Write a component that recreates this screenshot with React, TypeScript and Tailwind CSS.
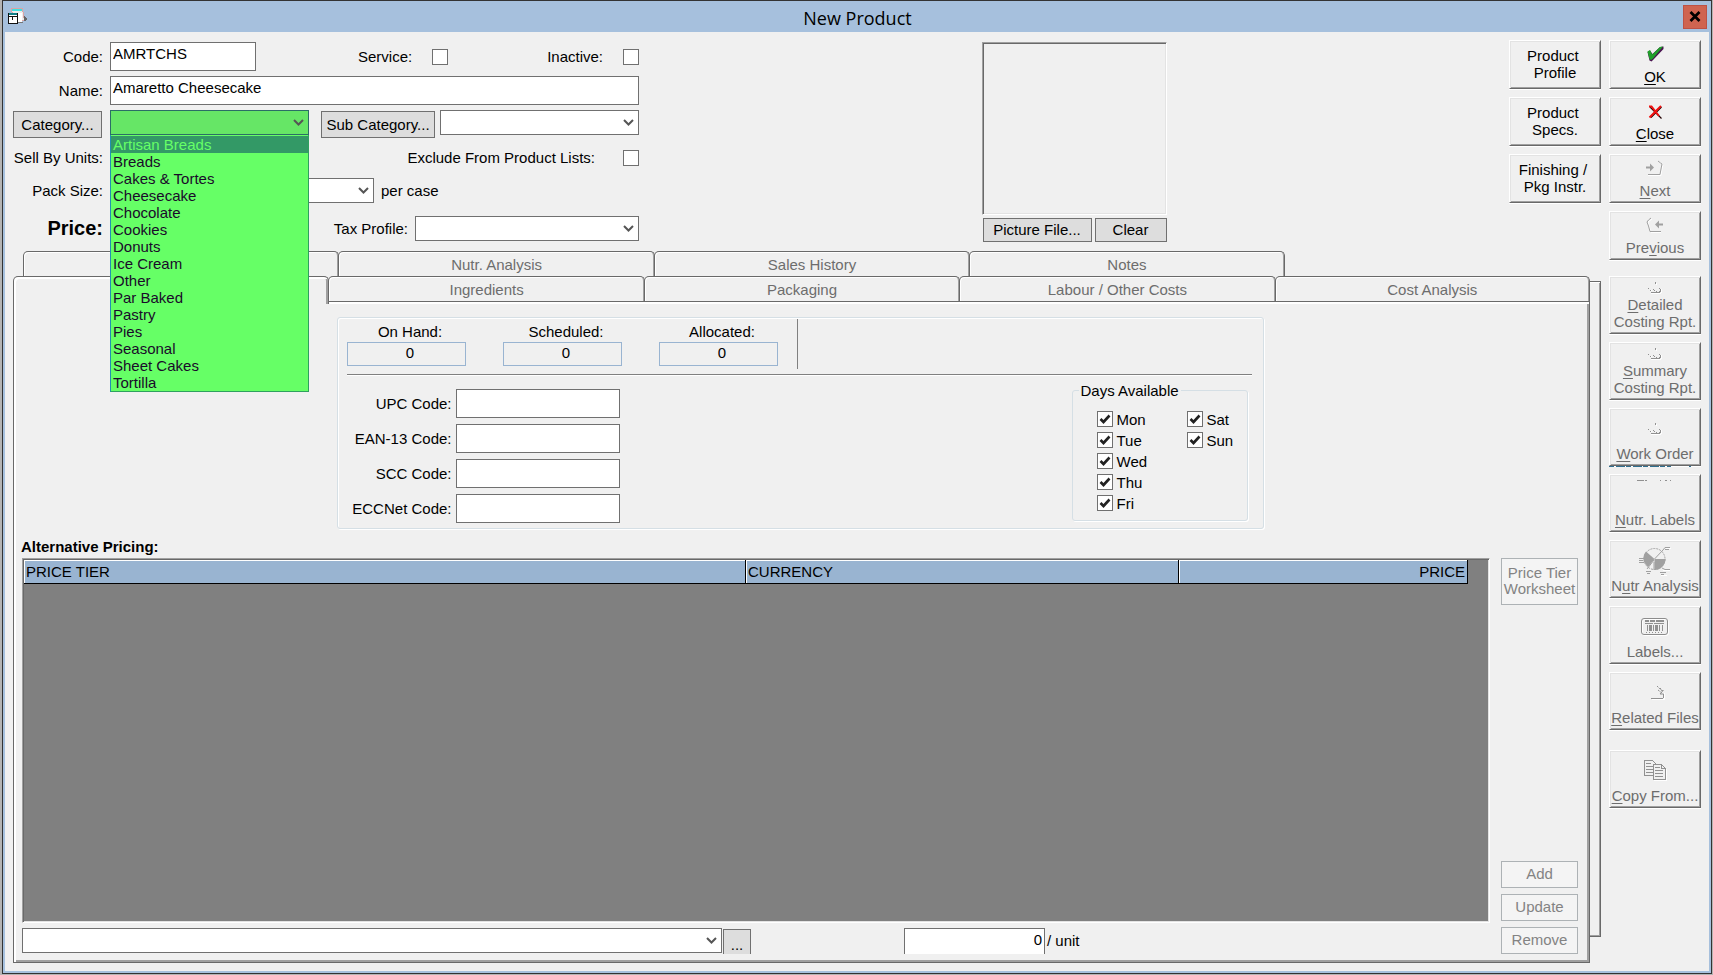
import { useState } from 'react';
import type { ReactNode } from 'react';
import clsx from 'clsx';

const categories = [
  'Artisan Breads',
  'Breads',
  'Cakes & Tortes',
  'Cheesecake',
  'Chocolate',
  'Cookies',
  'Donuts',
  'Ice Cream',
  'Other',
  'Par Baked',
  'Pastry',
  'Pies',
  'Seasonal',
  'Sheet Cakes',
  'Tortilla',
];

const backTabs = ['', 'Nutr. Analysis', 'Sales History', 'Notes'];
const frontTabs = ['', 'Ingredients', 'Packaging', 'Labour / Other Costs', 'Cost Analysis'];
const codes = ['UPC Code:', 'EAN-13 Code:', 'SCC Code:', 'ECCNet Code:'];
const stock = ['On Hand:', 'Scheduled:', 'Allocated:'];

const field = 'border border-[#707070] bg-white px-0.5';
const flatButton = 'border border-[#707070] bg-[#dddddd] text-center';
const disabledButton = 'border border-[#adb2b5] bg-[#f4f4f4] pb-0.5 text-center text-[#838383]';
const sunken =
  'border border-t-[#a0a0a0] border-l-[#a0a0a0] border-r-white border-b-white shadow-[inset_1px_1px_0_#696969,inset_-1px_-1px_0_#e3e3e3]';
const raised =
  'border border-t-white border-l-white border-r-[#696969] border-b-[#696969] shadow-[inset_1px_1px_0_#e3e3e3,inset_-1px_-1px_0_#a0a0a0,0_1px_0_#fff]';

function Combo({ id, label, className, green }: { id: string; label?: string; className?: string; green?: boolean }) {
  return (
    <div className={clsx('relative h-[25px]', className)}>
      <select
        id={id}
        aria-label={label}
        className={clsx(
          'block h-full w-full appearance-none border px-0.5 outline-none',
          green ? 'border-[#2b6e66] bg-[#66e666]' : 'border-[#707070] bg-white',
        )}
      >
        <option value=""></option>
        {green && categories.map((c) => <option key={c}>{c}</option>)}
      </select>
      <svg className="pointer-events-none absolute top-[9px] right-[5px]" width="11" height="8" viewBox="0 0 11 8">
        <path d="M1 1 L5.5 5.5 L10 1" fill="none" stroke="#555" strokeWidth="2" />
      </svg>
    </div>
  );
}

function Check({ id, initial = false }: { id: string; initial?: boolean }) {
  const [on, setOn] = useState(initial);
  return (
    <span className="relative block h-4 w-4 shrink-0">
      <input
        id={id}
        type="checkbox"
        checked={on}
        onChange={() => setOn(!on)}
        className="block h-4 w-4 appearance-none border border-[#707070] bg-white"
      />
      {on && (
        <svg className="pointer-events-none absolute inset-0" width="16" height="16" viewBox="0 0 16 16">
          <path d="M3.5 8 L6.5 11 L12.5 4.5" fill="none" stroke="#222" strokeWidth="2.6" />
        </svg>
      )}
    </span>
  );
}

function Tab({ label, active, onClick }: { label: string; active?: boolean; onClick?: () => void }) {
  return (
    <button
      type="button"
      onClick={onClick}
      className={clsx(
        '-mr-px h-[25px] rounded-t-[5px] border border-b-0 border-[#696969] bg-[#f0f0f0] text-[#6d6d6d] last:mr-0',
        active
          ? 'relative z-10 -mb-[3px] h-[28px] shadow-[inset_2px_2px_0_#fff,inset_-2px_0_0_#a0a0a0]'
          : 'shadow-[inset_1px_1px_0_#fff,inset_-1px_0_0_#a0a0a0]',
      )}
    >
      {label}
    </button>
  );
}

// Side buttons: icon on top, caption with its access key underlined
function ToolButton({
  icon,
  before = '',
  accel = '',
  after,
  line2,
  small,
  enabled,
}: {
  icon: ReactNode;
  before?: string;
  accel?: string;
  after: string;
  line2?: string;
  small?: boolean;
  enabled?: boolean;
}) {
  return (
    <button
      type="button"
      disabled={!enabled}
      className={clsx(
        raised,
        'flex w-full shrink-0 flex-col items-center pt-[3px] pb-[3px] whitespace-nowrap',
        small ? 'h-[49px]' : 'h-[58px]',
        enabled ? 'text-black' : 'text-[#6d6d6d]',
      )}
    >
      <span className={clsx('grid flex-1 justify-items-center', small ? 'items-start pt-0.5' : 'items-center')}>{icon}</span>
      <span className="block">
        {before}
        {accel && <u className="underline-offset-2">{accel}</u>}
        {after}
      </span>
      {line2 && <span className="block">{line2}</span>}
    </button>
  );
}

function AppIcon() {
  return (
    <svg width="20" height="17" viewBox="0 0 20 17" shapeRendering="crispEdges">
      <path d="M3.5 0.5 H14.5 L16.5 12.5 H5.5 Z" fill="#ececec" stroke="#d9a5a5" />
      <path d="M4 1 H14 V3 H4 Z" fill="#40e0e0" />
      <path d="M16 8 L19 11 L17 13 L16 13 Z" fill="#666" />
      <path d="M6 5 H14 V14 H9 V6 H6 Z" fill="#fff" />
      <path d="M10 14.5 H15" stroke="#777" />
      <path d="M0.5 5.5 H9.5 V15.5 H0.5 Z" fill="#fff" stroke="#111" />
      <path d="M1 5 H9 V7 H1 Z" fill="#0f7f86" />
      <path d="M0 8.5 H10 M4.5 9 V12" stroke="#111" />
    </svg>
  );
}

function OkIcon() {
  return (
    <svg width="17" height="16" viewBox="0 0 17 16">
      <path d="M0.5 6 L3 4.5 L5.5 8 L13 1 L16.5 0.5 L16.5 3 L6.5 13.5 L4.5 15.5 L2.5 14.5 Z" fill="#4a1450" />
      <path d="M0.5 5.5 L3 4 L5.2 8.5 L13 1 L16 0.5 L6 12.5 L4 14 L2.5 13 Z" fill="#1fa02a" />
    </svg>
  );
}

function CloseIcon() {
  return (
    <svg width="15" height="17" viewBox="0 -2 15 17">
      <path d="M2 2 L13.5 13.5 M13.5 2 L3 12.5" stroke="#200" strokeWidth="1.2" />
      <path d="M1 1.5 L3.5 1.5 L11 11 M13 1 L7 7 L1.5 12.5" fill="none" stroke="#f01010" strokeWidth="2" />
    </svg>
  );
}

function NextIcon() {
  return (
    <svg width="18" height="17" viewBox="0 0 18 17" fill="none">
      <path d="M13 2 L17 5 L16 9 L15 15.5 H2" stroke="#fff" strokeWidth="1" />
      <path d="M12 1 L14.5 3 L16 4 L15 9 L14 14.5 H2" stroke="#a0a0a0" />
      <path d="M0 6.5 H4 V3.5 L8 7.5 L4 11.5 V8.5 H0 Z" fill="#a0a0a0" />
    </svg>
  );
}

function PreviousIcon() {
  return (
    <svg width="18" height="17" viewBox="0 0 18 17" fill="none">
      <path d="M6 2 L2 5 L5 15.5 H15" stroke="#fff" />
      <path d="M5 1 L2.5 3 L1 5 L2.5 9 L4 14.5 H15" stroke="#a0a0a0" />
      <path d="M17 6.5 H13 V3.5 L9 7.5 L13 11.5 V8.5 H17 Z" fill="#a0a0a0" />
    </svg>
  );
}

function ReportIcon() {
  return (
    <svg width="16" height="14" viewBox="0 0 16 14" fill="none" shapeRendering="crispEdges">
      <path d="M9.5 2 V4 M3 9.5 H5 M14.5 8 V12 M4 12.5 H14" stroke="#fff" />
      <path d="M8.5 1 V3" stroke="#909090" />
      <path d="M1 7.5 H2 M3 9.5 H4 M6 8.5 H7 M7 9.5 H8 M12 7.5 H13 M13.5 8 V11 M9 10.5 H10 M12 10.5 H13 M4 11.5 H13" stroke="#909090" />
    </svg>
  );
}

function PieIcon() {
  return (
    <svg width="32" height="30" viewBox="0 0 32 30" fill="none">
      <path d="M24 24.5 H31 M22 29.5 H28 M27 2.5 H32" stroke="#fff" />
      <circle cx="15.5" cy="13" r="10.5" stroke="#a0a0a0" strokeDasharray="2 1" />
      <path d="M15.5 13 L7 5.5 A11 11 0 0 0 5 16 L9 21 Z" fill="#a0a0a0" />
      <path d="M15.5 13 H26.5 A11 11 0 0 1 15.5 24 Z" fill="#a0a0a0" />
      <path d="M15.5 13 L24 4 L26 1.5 H31 M26 3.5 H30 M0 12.5 H5 M0 14.5 H4 M0 16.5 H5 M15 14 L8 23 M7 25.5 H12 M8 27.5 H11 M15 16 V24 M23 22 L26 23.5 H31 M21 26.5 H27 M22 28.5 H25" stroke="#a0a0a0" />
    </svg>
  );
}

function BarcodeIcon() {
  return (
    <svg width="28" height="18" viewBox="0 0 28 18" fill="none">
      <rect x="1.5" y="1.5" width="26" height="16" rx="2.5" stroke="#fff" />
      <rect x="0.5" y="0.5" width="26" height="16" rx="2.5" stroke="#8c8c8c" />
      <g stroke="#909090" shapeRendering="crispEdges">
        <path d="M4 3 H8 M9 3 H14 M15 3 H23" strokeWidth="2" />
        <path d="M4 5.5 H12 M13 5.5 H23" />
        <path d="M6.5 7 V13 M10.5 7 V13 M12.5 7 V13 M16.5 7 V13 M18.5 7 V13 M21.5 7 V13" />
        <path d="M9 7 V13 M15 7 V13" strokeWidth="2" />
        <path d="M5 14.5 H23" strokeDasharray="1 2" />
      </g>
    </svg>
  );
}

function RelatedIcon() {
  return (
    <svg width="20" height="16" viewBox="-4 0 20 16" fill="none">
      <path d="M3 14.5 H15.5 V8" stroke="#fff" />
      <path d="M8 1 L13 6 M11 3 L14 6 M9 5 L13 8" stroke="#909090" strokeDasharray="2 1" />
      <path d="M14.5 5 L11 9 H14.5 V13 M2 13.5 H14" stroke="#909090" />
    </svg>
  );
}

function CopyIcon() {
  return (
    <svg width="23" height="21" viewBox="0 0 23 21" shapeRendering="crispEdges">
      <path d="M0.5 0.5 H8.5 L12.5 4.5 V15.5 H0.5 Z" fill="#f0f0f0" stroke="#909090" />
      <path d="M2 3.5 H7 M2 6.5 H10 M2 9.5 H10 M2 12.5 H10" stroke="#909090" />
      <path d="M9.5 4.5 H17.5 L21.5 8.5 V19.5 H9.5 Z" fill="#f0f0f0" stroke="#909090" />
      <path d="M17.5 4.5 V8.5 H21.5" fill="none" stroke="#909090" />
      <path d="M11 7.5 H16 M11 10.5 H19 M11 13.5 H19 M11 16.5 H19" stroke="#909090" />
      <path d="M22.5 9 V20.5 H10" fill="none" stroke="#fff" />
    </svg>
  );
}

function TitleBar() {
  return (
    <header className="grid h-[31px] grid-cols-[1fr_auto_1fr] items-center pr-0.5 pl-[3px]">
      <AppIcon />
      <h1 className="pt-0.5 font-['Open_Sans',sans-serif] text-[18px] leading-6">New Product</h1>
      <button
        type="button"
        aria-label="Close window"
        className="grid h-6 w-6 place-items-center justify-self-end border border-[#bd5245] bg-[#cf6450]"
      >
        <svg width="12" height="11" viewBox="0 0 12 11">
          <path d="M1.5 1 L10.5 10 M10.5 1 L1.5 10" stroke="#000" strokeWidth="2.8" />
        </svg>
      </button>
    </header>
  );
}

function ProductForm() {
  const [selected, setSelected] = useState('Artisan Breads');
  const row = 'flex items-center gap-[7px]';
  const rowLabel = '-ml-2 w-[98px] shrink-0 text-right whitespace-nowrap';

  return (
    <form className="w-[626px] shrink-0 pt-0.5">
      <div className={row}>
        <label htmlFor="code" className={rowLabel}>Code:</label>
        <input id="code" defaultValue="AMRTCHS" className={clsx(field, 'h-[29px] w-[146px] pb-1.5')} />
        <div className="flex flex-1 items-center justify-between pl-[95px]">
          <div className="flex items-center gap-5">
            <label htmlFor="service">Service:</label>
            <Check id="service" />
          </div>
          <div className="flex items-center gap-5">
            <label htmlFor="inactive">Inactive:</label>
            <Check id="inactive" />
          </div>
        </div>
      </div>

      <div className={clsx(row, 'mt-[5px]')}>
        <label htmlFor="name" className={rowLabel}>Name:</label>
        <input id="name" defaultValue="Amaretto Cheesecake" className={clsx(field, 'h-[29px] min-w-0 flex-1 pb-1.5')} />
      </div>

      <div className="mt-[5px] flex h-7 items-start">
        <button type="button" className={clsx(flatButton, 'mt-px mr-2 h-[27px] w-[89px]')}>Category...</button>
        <div className="relative z-20 w-[199px]">
          <Combo id="category" label="Category" green />
          <ul
            role="listbox"
            aria-label="Categories"
            className="absolute top-full left-0 w-full border border-t-0 border-[#2fa05f] border-l-[#2290b0] bg-[#66ff66] pt-px"
          >
            {categories.map((c) => (
              <li
                key={c}
                role="option"
                aria-selected={c === selected}
                onMouseEnter={() => setSelected(c)}
                className={clsx('h-[17px] px-0.5', c === selected ? 'bg-[#339966] text-[#66ff66]' : 'text-[#1a0a2a]')}
              >
                {c}
              </li>
            ))}
          </ul>
        </div>
        <button type="button" className={clsx(flatButton, 'mt-px mr-[5px] ml-3 h-[27px] w-[114px]')}>Sub Category...</button>
        <Combo id="subcategory" label="Sub category" className="flex-1" />
      </div>

      <div className={clsx(row, 'mt-[7px]')}>
        <label htmlFor="units" className={rowLabel}>Sell By Units:</label>
        <Combo id="units" className="w-[190px]" />
        <div className="flex flex-1 items-center justify-end gap-7">
          <label htmlFor="exclude">Exclude From Product Lists:</label>
          <Check id="exclude" />
        </div>
      </div>

      <div className={clsx(row, 'mt-2')}>
        <label htmlFor="pack" className={rowLabel}>Pack Size:</label>
        <Combo id="pack" className="w-[264px]" />
        <span>per case</span>
      </div>

      <div className={clsx(row, 'mt-[13px]')}>
        <label htmlFor="price" className={clsx(rowLabel, 'text-[20px] font-bold')}>Price:</label>
        <input id="price" className={clsx(field, 'h-[25px] w-[190px]')} />
        <label htmlFor="tax" className="flex-1 text-right">Tax Profile:</label>
        <Combo id="tax" className="w-[224px]" />
      </div>
    </form>
  );
}

function StockPanel() {
  return (
    <section className="mx-auto w-[927px] rounded-[3px] border border-[#d5dfe5] px-[9px] pt-px pb-[5px] shadow-[inset_1px_1px_0_#fff,1px_1px_0_#fff]">
      <div className="flex h-[50px]">
        {stock.map((name) => (
          <label key={name} className="mr-[37px] block w-[119px] pt-1">
            <span className="block pl-2 text-center">{name}</span>
            <input
              readOnly
              value="0"
              className="mt-0.5 block h-6 w-full border border-[#99b4d1] bg-transparent pb-1 pl-2 text-center"
            />
          </label>
        ))}
        <div className="-ml-[18px] border-l border-[#808080]" />
      </div>
      <hr className="mt-[5px] mr-0.5 border-[#808080] shadow-[0_1px_0_#fff]" />

      <div className="flex items-start justify-between pr-1.5">
        <div className="mt-[14px] flex flex-col gap-1.5">
          {codes.map((name) => (
            <label key={name} className="flex items-center gap-1">
              <span className="w-[105px] text-right">{name}</span>
              <input className={clsx(field, 'h-[29px] w-[164px]')} />
            </label>
          ))}
        </div>

        <fieldset className="mt-[7px] w-[176px] rounded-[3px] border border-[#d5dfe5] pb-[9px] pl-6 shadow-[1px_1px_0_#fff]">
          <legend className="-ml-[18px] px-0.5">Days Available</legend>
          <div className="flex pt-3">
            {[['Mon', 'Tue', 'Wed', 'Thu', 'Fri'], ['Sat', 'Sun']].map((days) => (
              <div key={days[0]} className="flex w-[90px] flex-col gap-[5px] last:w-auto">
                {days.map((day) => (
                  <div key={day} className="flex h-4 items-center gap-1">
                    <Check id={day} initial />
                    <label htmlFor={day}>{day}</label>
                  </div>
                ))}
              </div>
            ))}
          </div>
        </fieldset>
      </div>
    </section>
  );
}

function Pricing() {
  const th = 'h-6 border-r border-b border-black px-0.5 font-normal shadow-[inset_1px_1px_0_#fff]';
  return (
    <section className="mt-[9px] flex flex-1 flex-col">
      <h2 className="-ml-px font-bold">Alternative Pricing:</h2>
      <div className="mt-[3px] flex flex-1 gap-[11px]">
        <div className="flex min-w-0 flex-1 flex-col">
          <div className={clsx(sunken, 'flex-1 bg-[#808080] p-px pr-[21px]')}>
            <table className="w-full table-fixed border-separate border-spacing-0 bg-[#99b4d1]">
              <thead>
                <tr>
                  <th className={clsx(th, 'w-1/2 text-left')}>PRICE TIER</th>
                  <th className={clsx(th, 'w-3/10 text-left')}>CURRENCY</th>
                  <th className={clsx(th, 'w-1/5 text-right')}>PRICE</th>
                </tr>
              </thead>
            </table>
          </div>
          <div className="mt-[5px] flex h-[26px]">
            <Combo id="tier" label="Price tier" className="w-[700px]" />
            <button type="button" aria-label="Browse price tiers" className={clsx(flatButton, 'mt-px ml-px w-7 border-b-0 pt-1')}>
              ...
            </button>
            <input
              id="unit-price"
              defaultValue="0"
              className={clsx(field, 'ml-[153px] w-[141px] border-b-0 pb-1 text-right')}
            />
            <label htmlFor="unit-price" className="pt-1 pl-0.5">/ unit</label>
          </div>
        </div>
        <div className="flex w-[77px] flex-col gap-1.5">
          <button type="button" disabled className={clsx(disabledButton, 'mb-auto h-[47px] leading-4')}>
            Price Tier Worksheet
          </button>
          <button type="button" disabled className={clsx(disabledButton, 'h-[27px]')}>Add</button>
          <button type="button" disabled className={clsx(disabledButton, 'h-[27px]')}>Update</button>
          <button type="button" disabled className={clsx(disabledButton, 'h-[27px]')}>Remove</button>
        </div>
      </div>
    </section>
  );
}

export default function App() {
  return (
    <div className="flex min-h-screen flex-col bg-[#b4b4b4] pr-px pb-px pl-0.5 font-['Liberation_Sans',Arial,sans-serif] text-[15px] leading-[17px] text-black">
      <div className="flex flex-1 flex-col border border-[#333333] bg-[#a6c0dd] px-0.5 pb-0.5">
        <TitleBar />
        <main className="flex flex-1 gap-2 bg-[#f0f0f0] p-2">
          <div className="flex min-w-0 flex-1 flex-col">
            <div className="flex items-start justify-between">
              <ProductForm />
              <div className="w-[185px] pt-0.5">
                <div className={clsx(sunken, 'h-[173px]')} />
                <div className="mt-[3px] flex gap-[3px] pl-px">
                  <button type="button" className={clsx(flatButton, 'h-6 w-[109px] pb-0.5')}>Picture File...</button>
                  <button type="button" className={clsx(flatButton, 'h-6 flex-1 pb-0.5')}>Clear</button>
                </div>
              </div>
              <div className="flex w-[92px] flex-col gap-2">
                {['Product \nProfile', 'Product \nSpecs.', 'Finishing / \nPkg Instr.'].map((text) => (
                  <button key={text} type="button" className={clsx(raised, 'h-[49px] pb-0.5 whitespace-pre')}>
                    {text}
                  </button>
                ))}
              </div>
            </div>

            <div className="mt-[9px] flex flex-1">
              <div className="flex min-w-0 flex-1 flex-col">
                <div className="-mr-[10px] ml-[10px] grid grid-cols-5">
                  {backTabs.map((label, i) => (
                    <Tab key={i} label={label} />
                  ))}
                </div>
                <div className="grid grid-cols-5">
                  {frontTabs.map((label, i) => (
                    <Tab key={i} label={label} active={i === 0} />
                  ))}
                </div>
                <div className="flex flex-1 flex-col border border-[#696969] pt-[15px] pr-[11px] pb-2 pl-2 shadow-[inset_2px_2px_0_#fff,inset_-2px_-2px_0_#a0a0a0]">
                  <StockPanel />
                  <Pricing />
                </div>
              </div>
              {/* edge of the tab page behind */}
              <div className="mt-[30px] mb-[26px] w-[11px] border border-l-0 border-[#696969] shadow-[inset_0_1px_0_#fff,inset_-1px_-1px_0_#a0a0a0]" />
            </div>
          </div>

          <aside className="flex w-[92px] shrink-0 flex-col gap-2">
            <ToolButton small enabled icon={<OkIcon />} accel="O" after="K" />
            <ToolButton small enabled icon={<CloseIcon />} accel="C" after="lose" />
            <ToolButton small icon={<NextIcon />} accel="N" after="ext" />
            <ToolButton small icon={<PreviousIcon />} before="Pre" accel="v" after="ious" />
            <div className="mt-2 flex flex-col gap-2">
              <ToolButton icon={<ReportIcon />} accel="D" after="etailed" line2="Costing Rpt." />
              <ToolButton icon={<ReportIcon />} accel="S" after="ummary" line2="Costing Rpt." />
              <div className="relative">
                <ToolButton icon={<ReportIcon />} accel="W" after="ork Order" />
                <svg className="absolute top-full left-0" width="84" height="1" viewBox="0 0 84 1" shapeRendering="crispEdges">
                  <path d="M0 0.5 H62 M80 0.5 H82" stroke="#2f6f8f" strokeDasharray="5 2 9 1" />
                </svg>
              </div>
              <ToolButton
                icon={
                  <svg width="36" height="32" viewBox="0 0 36 32">
                    <path d="M0 1.5 H7 M8 1.5 H10 M23 1.5 H24 M28 1.5 H30 M33 1.5 H34" stroke="#909090" />
                  </svg>
                }
                accel="N"
                after="utr. Labels"
              />
              <ToolButton icon={<PieIcon />} before="N" accel="u" after="tr Analysis" />
              <ToolButton icon={<BarcodeIcon />} after="Labels..." />
              <ToolButton icon={<RelatedIcon />} accel="R" after="elated Files" />
            </div>
            <div className="mt-3">
              <ToolButton icon={<CopyIcon />} accel="C" after="opy From..." />
            </div>
          </aside>
        </main>
      </div>
    </div>
  );
}
